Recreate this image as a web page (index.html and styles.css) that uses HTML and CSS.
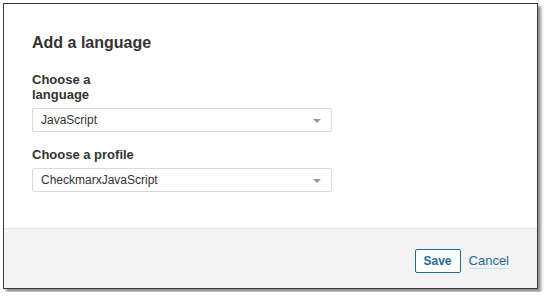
FILE: index.html
```html
<!DOCTYPE html>
<html lang="en">
<head>
<meta charset="utf-8">
<title>Add a language</title>
<link rel="stylesheet" href="styles.css">
</head>
<body>
<div class="page">
  <div class="dialog">
    <div class="dialog-body">
      <h2 class="dialog-title">Add a language</h2>
      <div class="field">
        <label class="field-label">Choose a<br>language</label>
        <div class="select">
          <span class="select-value">JavaScript</span>
          <span class="select-arrow"></span>
        </div>
      </div>
      <div class="field">
        <label class="field-label">Choose a profile</label>
        <div class="select">
          <span class="select-value">CheckmarxJavaScript</span>
          <span class="select-arrow"></span>
        </div>
      </div>
    </div>
    <div class="dialog-footer">
      <button class="btn" type="button">Save</button>
      <a class="link" href="#">Cancel</a>
    </div>
  </div>
</div>
</body>
</html>
```
FILE: styles.css
```css
html, body {
  margin: 0;
  padding: 0;
  background: #ffffff;
}

body {
  font-family: "Liberation Sans", Arial, sans-serif;
  color: #333333;
}

.page {
  padding: 3px;
}

.dialog {
  box-sizing: border-box;
  width: 535px;
  height: 286px;
  border: 1px solid #3a3a3a;
  background: #ffffff;
  box-shadow: 3px 3px 3px rgba(0, 0, 0, 0.45);
  display: flex;
  flex-direction: column;
}

.dialog-body {
  flex: 1;
  padding: 29px 28px 0 28px;
}

.dialog-title {
  margin: 0;
  font-size: 16px;
  line-height: 20px;
  font-weight: bold;
  color: #333333;
}

.field {
  margin-top: 19px;
}

.field + .field {
  margin-top: 15px;
}

.field-label {
  display: block;
  font-size: 13px;
  line-height: 15px;
  font-weight: bold;
  color: #333333;
  margin-bottom: 6px;
}

.select {
  box-sizing: border-box;
  width: 300px;
  height: 24px;
  border: 1px solid #d9d9d9;
  border-radius: 2px;
  background: #ffffff;
  display: flex;
  align-items: center;
  justify-content: space-between;
  padding: 0 10px 0 8px;
}

.select-value {
  font-size: 12px;
  line-height: 22px;
  color: #333333;
}

.select-arrow {
  width: 0;
  height: 0;
  border-left: 4px solid transparent;
  border-right: 4px solid transparent;
  border-top: 4px solid #999999;
  margin-top: 1px;
}

.dialog-footer {
  box-sizing: border-box;
  height: 60px;
  border-top: 1px solid #e6e6e6;
  background: #f3f3f3;
  display: flex;
  justify-content: flex-end;
  align-items: flex-start;
  padding: 20px 28px 0 0;
}

.btn {
  box-sizing: border-box;
  height: 24px;
  padding: 0 8px;
  border: 1px solid #236a97;
  border-radius: 2px;
  background: #ffffff;
  color: #236a97;
  font-family: "Liberation Sans", Arial, sans-serif;
  font-size: 12px;
  font-weight: bold;
  line-height: 22px;
  cursor: pointer;
}

.link {
  margin-left: 8px;
  margin-top: 5px;
  font-size: 13px;
  line-height: 14px;
  color: #236a97;
  text-decoration: none;
  border-bottom: 1px solid #cae3f2;
}
```
